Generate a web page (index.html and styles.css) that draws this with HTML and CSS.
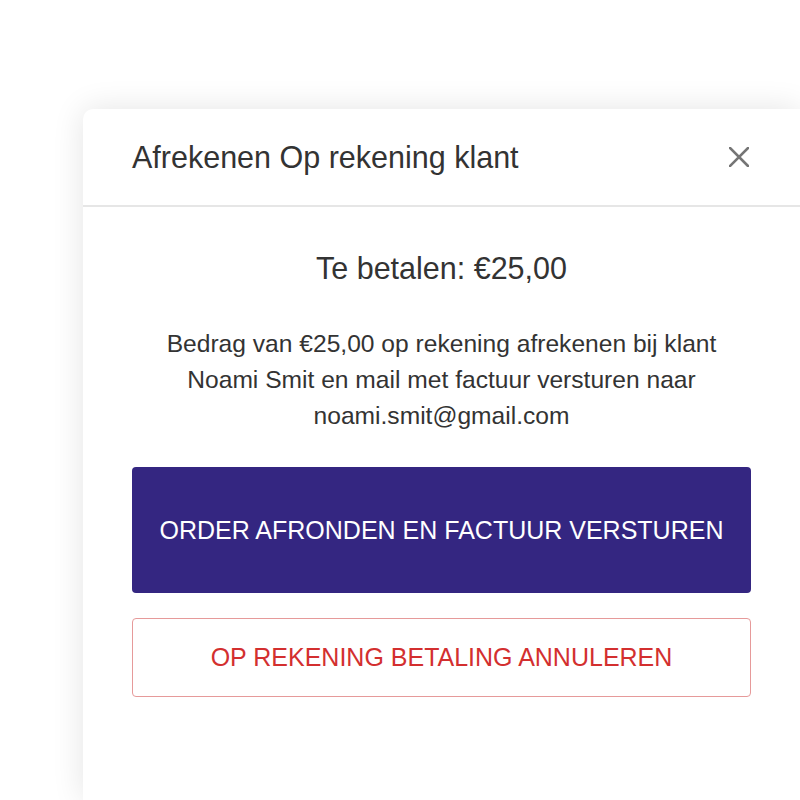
FILE: index.html
```html
<!DOCTYPE html>
<html lang="nl">
<head>
  <meta charset="UTF-8" />
  <title>Afrekenen Op rekening klant</title>
  <link rel="stylesheet" href="styles.css">
</head>
<body>
  <div class="backdrop">
    <div class="dialog">
      <div class="dialog-header">
        <h1>Afrekenen Op rekening klant</h1>
        <button class="close" aria-label="Sluiten">
          <svg width="20" height="20" viewBox="0 0 20 20"><path d="M1 1 L19 19 M19 1 L1 19" stroke="#757575" stroke-width="2.6" stroke-linecap="square"/></svg>
        </button>
      </div>
      <div class="dialog-body">
        <p class="amount">Te betalen: €25,00</p>
        <p class="info">Bedrag van €25,00 op rekening afrekenen bij klant Noami Smit en mail met factuur versturen naar noami.smit@gmail.com</p>
        <button class="btn btn-primary">ORDER AFRONDEN EN FACTUUR VERSTUREN</button>
        <button class="btn btn-cancel">OP REKENING BETALING ANNULEREN</button>
      </div>
    </div>
  </div>
</body>
</html>
```

FILE: styles.css
```css
* { box-sizing: border-box; margin: 0; padding: 0; }
html, body { height: 100%; }
body { font-family: 'Liberation Sans', Arial, sans-serif; background: #fff; color: #333; overflow: hidden; }
.backdrop { padding: 109px 0 0 83px; height: 100%; }
.dialog {
  width: 717px; height: 691px; background: #fff;
  border-radius: 10px 0 0 0; box-shadow: 0 0 32px rgba(0,0,0,0.11);
}
.dialog-header {
  display: flex; align-items: center; justify-content: space-between;
  height: 98px; padding: 0 51px 0 49px; border-bottom: 2px solid #e6e6e6;
}
.dialog-header h1 { font-size: 30.5px; font-weight: normal; color: #333; }
.close { background: none; border: none; display: flex; cursor: pointer; }
.dialog-body { padding: 43px 49px 0; text-align: center; }
.amount { font-size: 30.5px; line-height: 36px; margin-bottom: 40px; }
.info { font-size: 24.6px; line-height: 36px; padding: 0 24px; margin-bottom: 33px; }
.btn {
  display: block; width: 100%; font-family: inherit; font-size: 25px;
  border-radius: 4px; cursor: pointer;
}
.btn-primary { height: 126px; background: #342681; color: #fff; border: none; margin-bottom: 25px; }
.btn-cancel { height: 79px; background: #fff; color: #d32f2f; border: 1px solid #e69a9a; }
```
